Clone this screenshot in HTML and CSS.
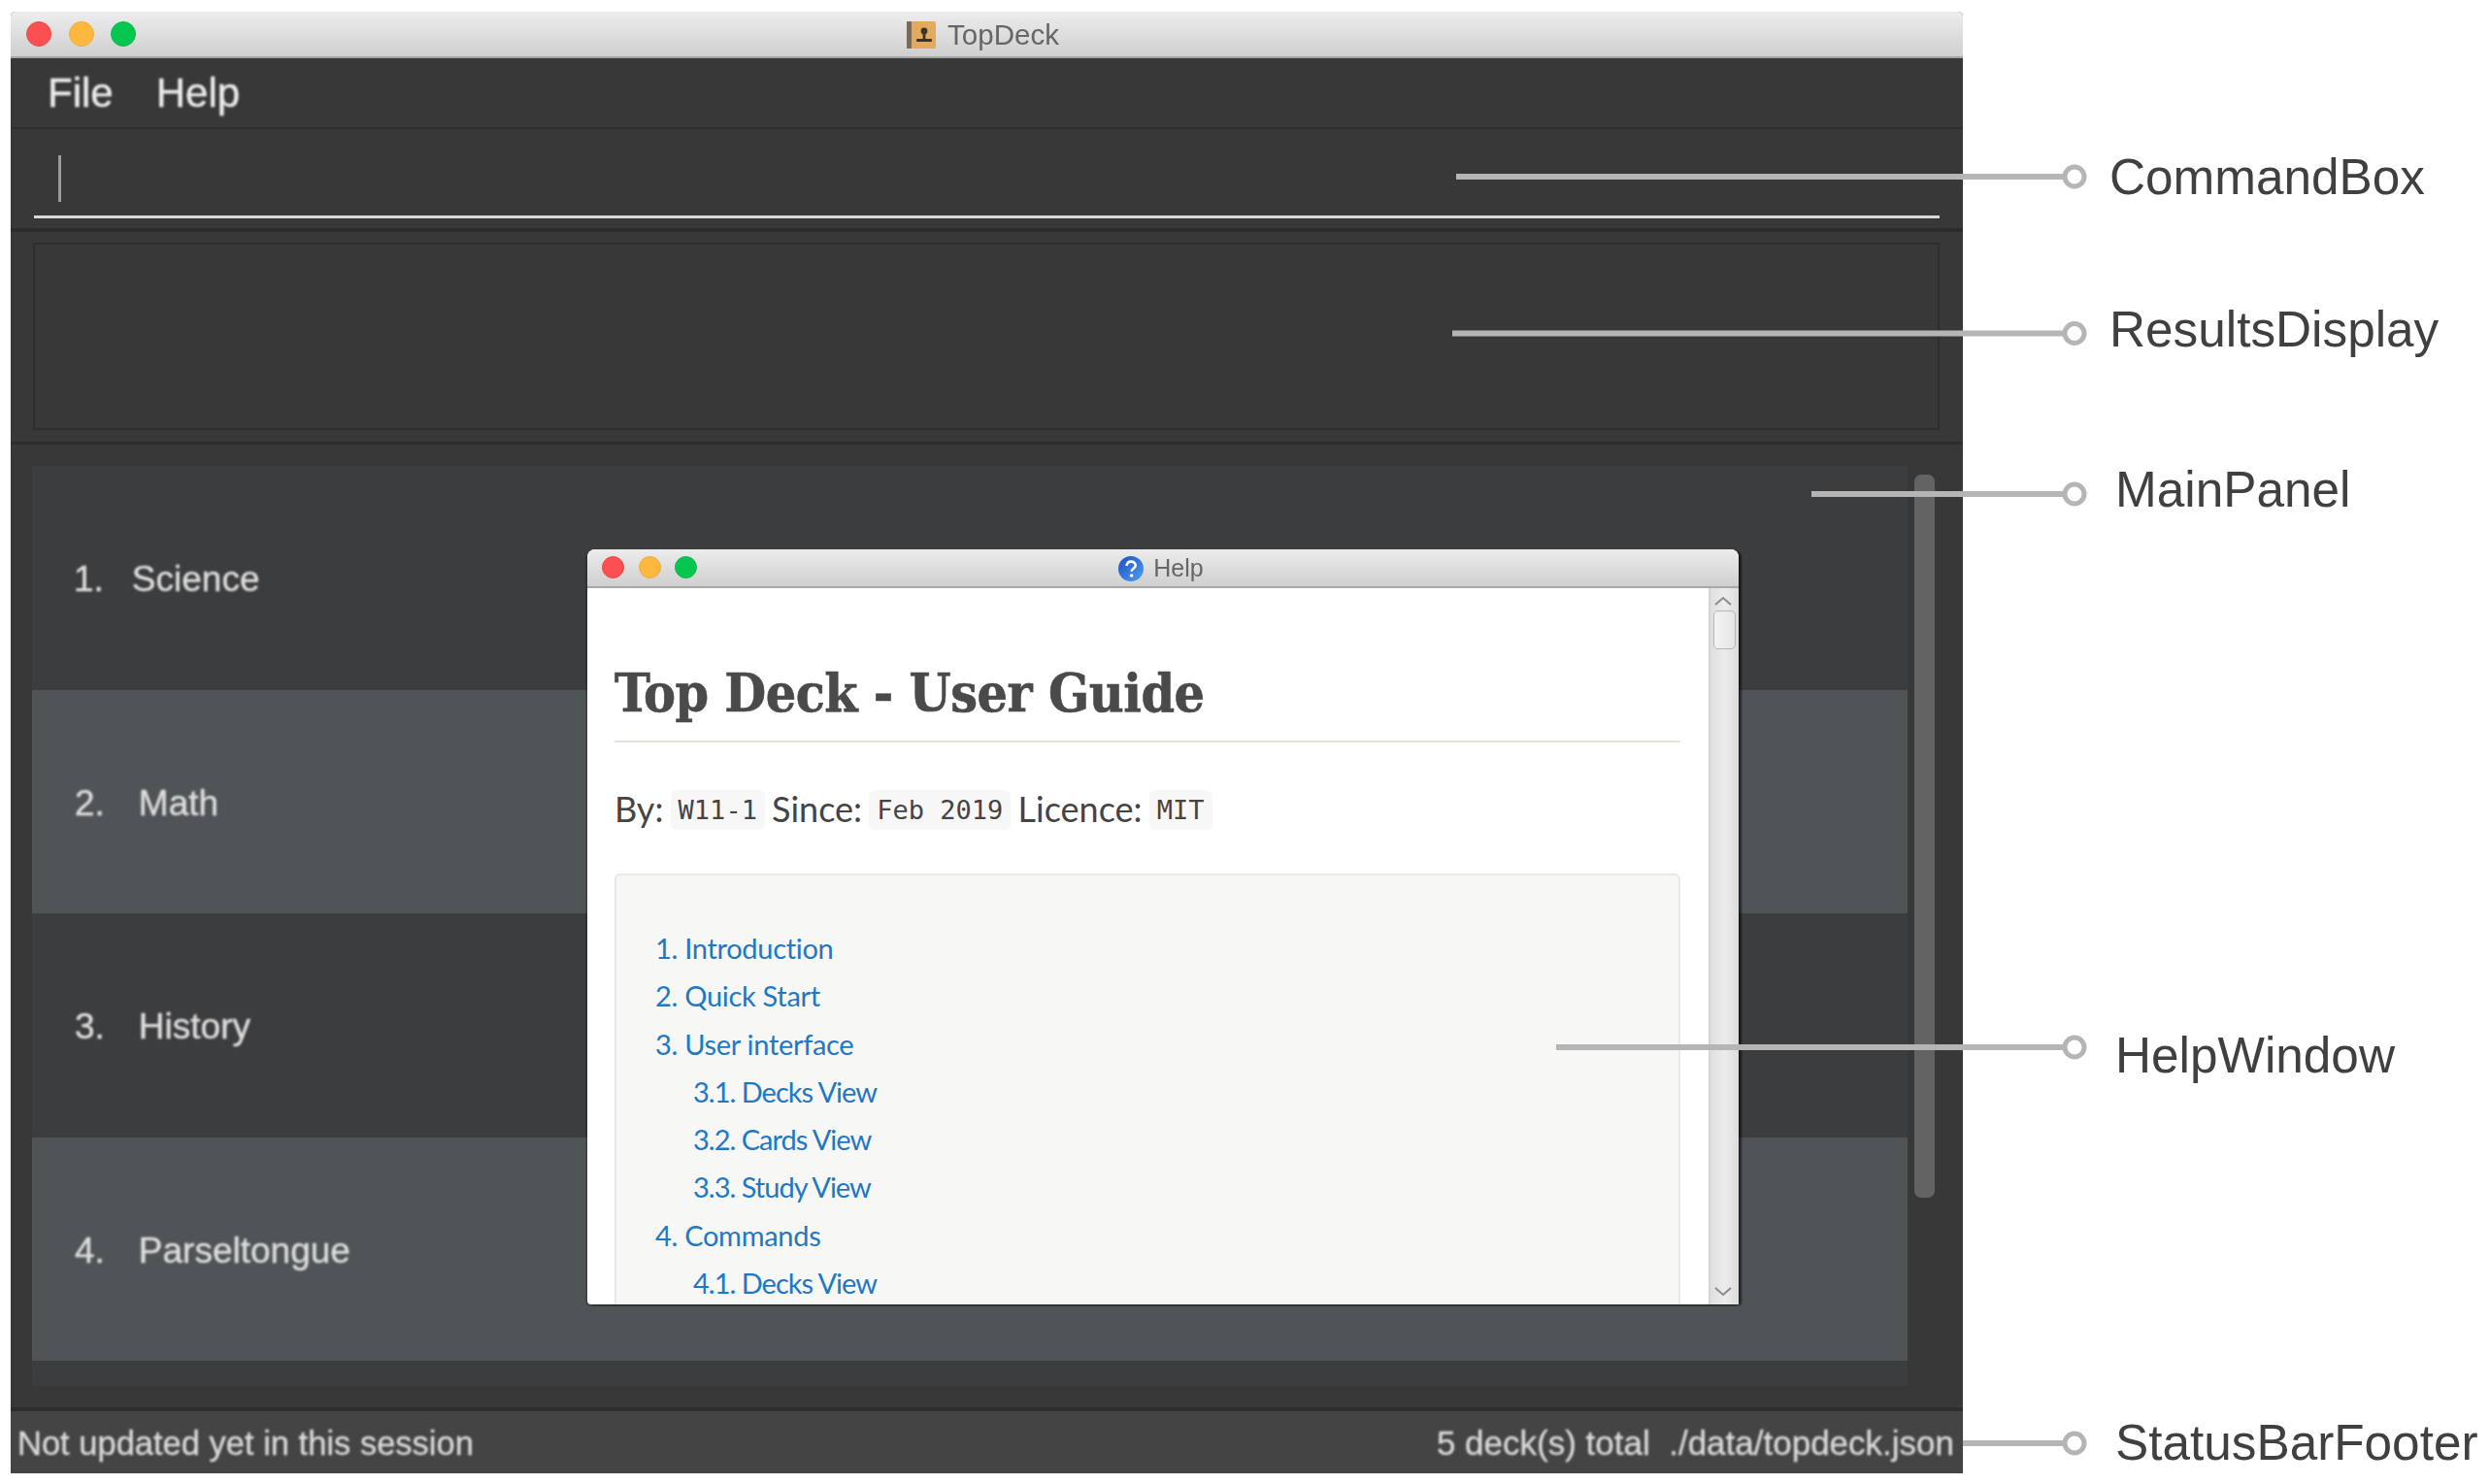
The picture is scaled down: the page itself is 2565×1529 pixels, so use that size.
FILE: index.html
```html
<!DOCTYPE html>
<html lang="en">
<head>
<meta charset="utf-8">
<title>TopDeck</title>
<link rel="stylesheet" href="styles.css">
</head>
<body>
<div class="stage">
  <main class="app">
    <header class="titlebar">
      <div class="lights">
        <span class="light red"></span><span class="light yellow"></span><span class="light green"></span>
      </div>
      <div class="window-title">
        <svg class="title-icon" width="30" height="28" viewBox="0 0 30 28"><rect x="0" y="0" width="30" height="28" rx="2" fill="#e3a95c"/><rect x="0" y="0" width="5" height="28" rx="1" fill="#7c6a58"/><circle cx="18" cy="10" r="3.4" fill="#3d3428"/><rect x="16.6" y="12" width="2.8" height="6" fill="#3d3428"/><rect x="10" y="18" width="16" height="3" rx="1" fill="#3d3428"/></svg>
        <span>TopDeck</span>
      </div>
    </header>
    <nav class="menubar"><span>File</span><span>Help</span></nav>
    <section class="commandbox">
      <div class="command-input"><span class="caret"></span></div>
    </section>
    <section class="results"><div class="results-box"></div></section>
    <section class="mainpanel">
      <div class="decklist">
        <div class="row"><span class="num">1.</span><span>Science</span></div>
        <div class="row row-alt row-even"><span class="num">2.</span><span>Math</span></div>
        <div class="row row-alt"><span class="num">3.</span><span>History</span></div>
        <div class="row row-alt row-even"><span class="num">4.</span><span>Parseltongue</span></div>
      </div>
      <div class="list-scroll"><div class="list-thumb"></div></div>
    </section>
    <footer class="status">
      <span>Not updated yet in this session</span>
      <span class="status-right">5 deck(s) total&nbsp;&nbsp;./data/topdeck.json</span>
    </footer>

    <div class="help">
      <header class="help-title">
        <div class="lights help-lights">
          <span class="light red"></span><span class="light yellow"></span><span class="light green"></span>
        </div>
        <div class="help-name">
          <svg width="26" height="26" viewBox="0 0 26 26"><defs><linearGradient id="q" x1="0" y1="0" x2="1" y2="1"><stop offset="0" stop-color="#1d4fc0"/><stop offset="1" stop-color="#4f9ff0"/></linearGradient></defs><circle cx="13" cy="13" r="13" fill="url(#q)"/><path d="M8.6 10c.2-3 2.3-4.4 4.7-4.4 2.6 0 4.4 1.6 4.4 3.8 0 3.4-4 3.3-4 6.4" fill="none" stroke="#fff" stroke-width="2.6"/><circle cx="13.6" cy="20" r="1.8" fill="#fff"/></svg>
          <span>Help</span>
        </div>
      </header>
      <div class="help-body">
        <article class="doc">
          <h1 class="doc-title">Top Deck - User Guide</h1>
          <p class="byline">By: <code>W11-1</code> Since: <code>Feb 2019</code> Licence: <code>MIT</code></p>
          <div class="toc">
            <a class="toc-item">1. Introduction</a>
            <a class="toc-item">2. Quick Start</a>
            <a class="toc-item">3. User interface</a>
            <a class="toc-item toc-sub">3.1. Decks View</a>
            <a class="toc-item toc-sub">3.2. Cards View</a>
            <a class="toc-item toc-sub">3.3. Study View</a>
            <a class="toc-item">4. Commands</a>
            <a class="toc-item toc-sub">4.1. Decks View</a>
          </div>
        </article>
        <aside class="help-scroll">
          <svg width="22" height="12" viewBox="0 0 22 12"><path d="M3 10 11 3l8 7" fill="none" stroke="#8c8c8c" stroke-width="2"/></svg>
          <div class="help-thumb"></div>
          <svg class="arrow-down" width="22" height="12" viewBox="0 0 22 12"><path d="M3 2l8 7 8-7" fill="none" stroke="#8c8c8c" stroke-width="2"/></svg>
        </aside>
      </div>
    </div>
  </main>

  <svg class="callouts" width="2565" height="1529" viewBox="0 0 2565 1529">
    <g fill="none" stroke="#b5b5b5">
      <path stroke-width="6" d="M1500 182H2125M1496 343.500H2125M1866 509H2125M1603 1079H2125M2022 1487H2125"/>
      <g stroke-width="5" fill="#fff">
        <circle cx="2137" cy="182" r="10"/>
        <circle cx="2137" cy="343.500" r="10"/>
        <circle cx="2137" cy="509" r="10"/>
        <circle cx="2137" cy="1079" r="10"/>
        <circle cx="2137" cy="1487" r="10"/>
      </g>
    </g>
  </svg>
  <div class="label label-command">CommandBox</div>
  <div class="label label-results">ResultsDisplay</div>
  <div class="label label-main">MainPanel</div>
  <div class="label label-help">HelpWindow</div>
  <div class="label label-status">StatusBarFooter</div>
</div>
</body>
</html>
```
FILE: styles.css
```css
* { box-sizing: border-box; }
html, body { margin: 0; background: #fff; }
body { font-family: "Liberation Sans", Arial, sans-serif; }
.stage { position: relative; width: 2565px; height: 1529px; overflow: hidden; padding: 12px 0 0 11px; }

.app { position: relative; width: 2011px; height: 1506px; display: flex; flex-direction: column; background: #383838; border-radius: 5px 5px 0 0; }

.titlebar { height: 48px; flex: none; display: flex; align-items: center; justify-content: center; position: relative; background: linear-gradient(#ededed, #cfcfcf); border-bottom: 2px solid #a5a5a5; border-radius: 5px 5px 0 0; }
.lights { position: absolute; left: 16px; top: 10px; display: flex; gap: 17.500px; }
.light { width: 26px; height: 26px; border-radius: 50%; filter: blur(.4px); }
.red { background: #fc4f52; border: 1px solid #e8484a; }
.yellow { background: #ffb83f; border: 1px solid #eea93a; }
.green { background: #05c750; border: 1px solid #0db54c; }
.window-title { display: flex; align-items: center; gap: 12px; font-size: 29.500px; color: #666; filter: blur(.7px); margin: 1px 8px 0 0; }

.menubar { height: 73px; flex: none; display: flex; align-items: center; gap: 44px; padding: 0 0 0 38px; font-size: 42px; color: #ececec; -webkit-text-stroke: .4px #ececec; border-bottom: 2px solid #2e2e2e; }
.menubar span { filter: blur(.8px); }

.commandbox { height: 106px; flex: none; padding: 0 24px; border-bottom: 4px solid #2c2c2c; }
.command-input { height: 92px; border-bottom: 3px solid #d8d8d8; padding: 27px 0 0 25px; }
.caret { display: block; width: 3px; height: 48px; background: #9a9a9a; }

.results { height: 219px; flex: none; padding: 11px 24px 12px 23px; border-bottom: 3px solid #2c2c2c; }
.results-box { height: 100%; border: 2px solid #2e2e2e; }

.mainpanel { flex: 1; display: flex; padding: 22px 0 22px 22px; }
.decklist { width: 1932px; background: #3c3d3f; display: flex; flex-direction: column; }
.row { height: 230.500px; flex: none; display: flex; align-items: center; gap: 29px; padding-left: 43px; padding-top: 4px; font-size: 37px; color: #dedede; -webkit-text-stroke: .4px #dedede; }
.row span { filter: blur(.8px); }
.row-alt { padding-left: 44px; gap: 35px; }
.row-even { background: #4f5456; }
.list-scroll { width: 21px; margin: 9px 0 0 7px; }
.list-thumb { height: 745px; background: #636363; border-radius: 7px; }

.status { height: 68px; flex: none; display: flex; align-items: center; justify-content: space-between; padding: 2px 9px 0 7px; background: #444; border-top: 4px solid #2e2e2e; font-size: 34.500px; color: #dcdcdc; -webkit-text-stroke: .3px #dcdcdc; }
.status span { filter: blur(.8px); }
.status-right { font-size: 35px; }

.help { position: absolute; left: 594px; top: 554px; width: 1186px; height: 778px; display: flex; flex-direction: column; background: #fff; border-radius: 8px 8px 4px 4px; box-shadow: 3px 1px 2px rgba(0,0,0,.55), -1px 1px 2px rgba(0,0,0,.4); }
.help-title { height: 40px; flex: none; position: relative; display: flex; align-items: center; justify-content: center; background: linear-gradient(#ececec, #cfcfcf); border-bottom: 2px solid #a8a8a8; border-radius: 8px 8px 0 0; }
.help-lights { left: 15px; top: 7px; gap: 14.500px; }
.help-lights .light { width: 23px; height: 23px; }
.help-name { display: flex; align-items: center; gap: 10px; font-size: 25px; color: #666; filter: blur(.6px); margin: 1px 4px 0 0; }

.help-body { flex: 1; min-height: 0; display: flex; }
.doc { flex: 1; min-width: 0; overflow: hidden; padding: 0 29px 0 28px; color: #444; font-family: Lato, "Noto Sans", sans-serif; }
.doc-title { margin: 0; height: 159px; padding-top: 70px; font: bold 55px/76px "DejaVu Serif Condensed", "DejaVu Serif", serif; letter-spacing: -.5px; color: #4a4a4a; -webkit-text-stroke: .6px #4a4a4a; border-bottom: 2px solid #e4e4de; filter: blur(.5px); }
.byline { margin: 0; height: 135px; padding-top: 49px; font-size: 36px; line-height: 39px; word-spacing: -3px; }
.byline code { display: inline-block; height: 41px; padding: 0 8px; margin: 0 1px; vertical-align: top; background: #f7f7f7; border-radius: 6px; font: 27px/42px "DejaVu Sans Mono", monospace; word-spacing: 0; color: #444; }
.toc { height: 600px; padding: 50px 0 0 40px; background: #f7f7f5; border: 2px solid #e8e8e4; border-radius: 6px; display: flex; flex-direction: column; align-items: flex-start; }
.toc-item { height: 49.300px; line-height: 49.300px; font-size: 29px; letter-spacing: -.3px; color: #1f78c4; }
.toc-sub { margin-left: 39px; letter-spacing: -1px; }

.help-scroll { width: 31px; flex: none; position: relative; background: linear-gradient(90deg, #dfdfdf, #ececec 50%, #dcdcdc); border-left: 2px solid #d4d4d4; padding: 7px 0 0 2px; display: flex; flex-direction: column; }
.help-thumb { width: 23px; height: 40px; margin: 4px 0 0 1px; background: linear-gradient(90deg, #f4f4f4, #e4e4e4); border: 1px solid #b5b5b5; border-radius: 5px; }
.arrow-down { margin-top: auto; margin-bottom: 7px; }

.callouts { position: absolute; left: 0; top: 0; pointer-events: none; }
.label { position: absolute; font-size: 51.300px; line-height: 56px; color: #404040; white-space: nowrap; }
.label-command { left: 2173px; top: 155px; }
.label-results { left: 2173px; top: 312px; }
.label-main { left: 2179px; top: 477px; }
.label-help { left: 2179px; top: 1060px; }
.label-status { left: 2179px; top: 1459px; }
```
